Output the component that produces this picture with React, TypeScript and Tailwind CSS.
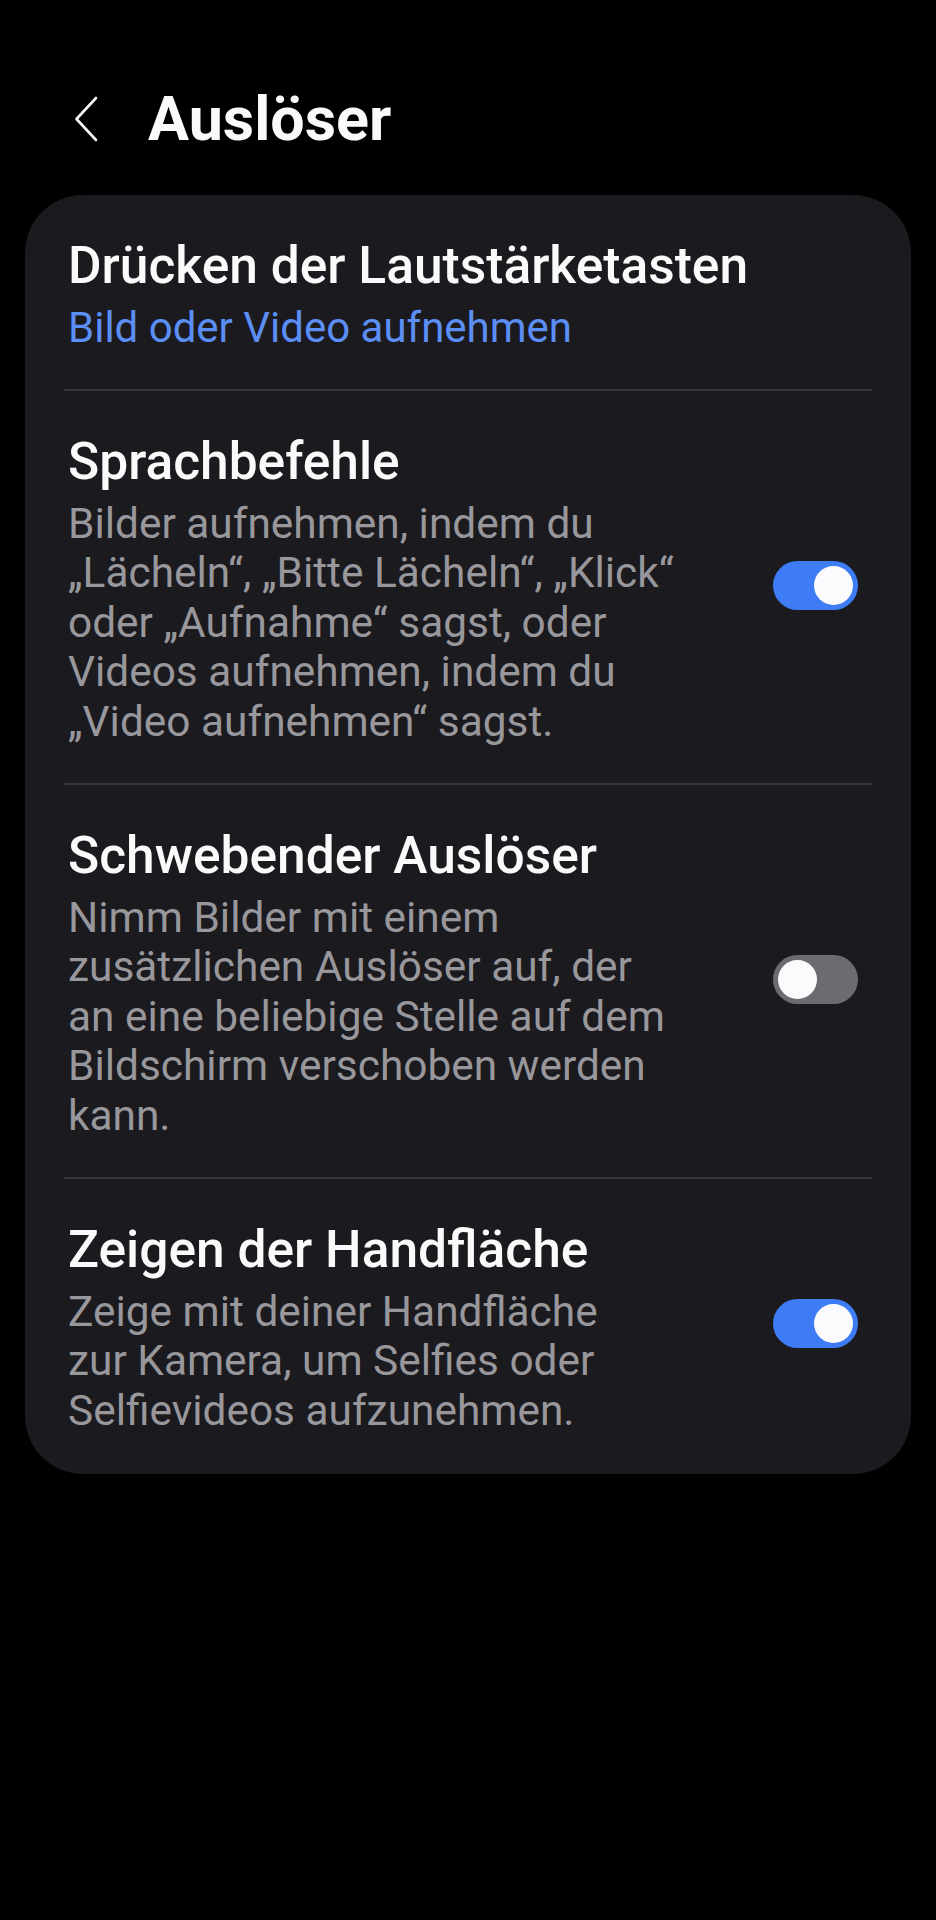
import React from "react";

const Toggle = ({ on }: { on: boolean }) => (
  <div
    className={
      on
        ? "relative mb-[7px] h-[49px] w-[85px] shrink-0 rounded-full bg-[#3d7cf5]"
        : "relative mb-[7px] h-[49px] w-[85px] shrink-0 rounded-full bg-[#6c6b70]"
    }
  >
    <div
      className={
        on
          ? "absolute right-[5px] top-[5px] h-[39px] w-[39px] rounded-full bg-[#fbfbfd]"
          : "absolute left-[5px] top-[5px] h-[39px] w-[39px] rounded-full bg-[#fbfbfd]"
      }
    />
  </div>
);

const Divider = () => <div className="mx-[39px] h-[2px] bg-[#38373c]" />;

const Item = ({
  title,
  lines,
  blue,
  toggle,
  last,
}: {
  title: string;
  lines: string[];
  blue?: boolean;
  toggle?: boolean;
  last?: boolean;
}) => (
  <div
    className={
      last
        ? "flex items-center pl-[43px] pr-[53px] pt-[41px] pb-[39px]"
        : "flex items-center pl-[43px] pr-[53px] pt-[41px] pb-[36px]"
    }
  >
    <div className="min-w-0 flex-1">
      <div className="whitespace-nowrap text-[51.5px] font-medium leading-[60px] text-[#fafafa]">
        {title}
      </div>
      <div
        className={
          blue
            ? "mt-[7px] text-[42px] leading-[49.6px] text-[#5b8ff5]"
            : "mt-[7px] text-[42.4px] leading-[49.6px] text-[#98979c]"
        }
      >
        {lines.map((l, i) => (
          <div key={i} className="whitespace-nowrap">
            {l}
          </div>
        ))}
      </div>
    </div>
    {toggle !== undefined && <Toggle on={toggle} />}
  </div>
);

export default function App() {
  return (
    <div
      className="min-h-[1920px] w-full bg-black"
      style={{ fontFamily: "Roboto, 'Noto Sans', sans-serif" }}
    >
      <div className="flex items-center pl-[74px] pt-[79px]">
        <svg width="24" height="46" viewBox="0 0 24 46" fill="none" className="shrink-0">
          <path
            d="M22 2 L2.5 23 L22 44"
            stroke="#f5f5f7"
            strokeWidth="2.6"
            strokeLinecap="round"
            strokeLinejoin="round"
          />
        </svg>
        <div className="ml-[50px] text-[61px] font-bold leading-[80px] text-[#fafafa]">
          Auslöser
        </div>
      </div>

      <div className="mx-[25px] mt-[36px] rounded-[58px] bg-[#1b1a1f]">
        <Item
          title="Drücken der Lautstärketasten"
          lines={["Bild oder Video aufnehmen"]}
          blue
        />
        <Divider />
        <Item
          title="Sprachbefehle"
          lines={[
            "Bilder aufnehmen, indem du",
            "„Lächeln“, „Bitte Lächeln“, „Klick“",
            "oder „Aufnahme“ sagst, oder",
            "Videos aufnehmen, indem du",
            "„Video aufnehmen“ sagst.",
          ]}
          toggle={true}
        />
        <Divider />
        <Item
          title="Schwebender Auslöser"
          lines={[
            "Nimm Bilder mit einem",
            "zusätzlichen Auslöser auf, der",
            "an eine beliebige Stelle auf dem",
            "Bildschirm verschoben werden",
            "kann.",
          ]}
          toggle={false}
        />
        <Divider />
        <Item
          title="Zeigen der Handfläche"
          lines={[
            "Zeige mit deiner Handfläche",
            "zur Kamera, um Selfies oder",
            "Selfievideos aufzunehmen.",
          ]}
          toggle={true}
          last
        />
      </div>
    </div>
  );
}
